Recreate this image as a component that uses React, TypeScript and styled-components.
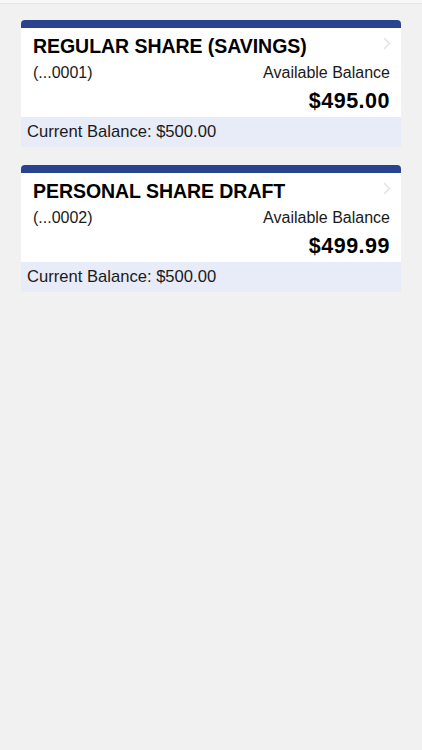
import React, { FC } from 'react';
import styled, { createGlobalStyle } from 'styled-components';

const GlobalStyle = createGlobalStyle`
  html, body {
    margin: 0;
    padding: 0;
    background: #f1f1f1;
  }
  body {
    font-family: "Liberation Sans", Arial, sans-serif;
    color: #000;
  }
`;

const Page = styled.div`
  min-height: 750px;
  background: #f1f1f1;
  border-top: 3px solid #f7f7f7;
  box-shadow: inset 0 1px 0 #e4e4e4;
  padding: 17px 21px 0 21px;
  box-sizing: border-box;
  display: flex;
  flex-direction: column;
  gap: 18px;
`;

const Card = styled.div`
  width: 380px;
  display: flex;
  flex-direction: column;
`;

const TopBar = styled.div`
  height: 8px;
  background: #2a4391;
  border-radius: 4px 4px 0 0;
`;

const Body = styled.div`
  position: relative;
  background: #fff;
  padding: 6px 11px 0 12px;
  height: 89px;
  box-sizing: border-box;
`;

const Title = styled.div`
  font-size: 19.5px;
  font-weight: 700;
  line-height: 24px;
  letter-spacing: -0.05px;
`;

const Row = styled.div`
  display: flex;
  justify-content: space-between;
  align-items: center;
  margin-top: 5px;
  font-size: 16px;
  line-height: 20px;
  color: #1a1a1a;
`;

const Amount = styled.div`
  text-align: right;
  font-size: 21.5px;
  font-weight: 700;
  line-height: 24px;
  margin-top: 6px;
  letter-spacing: 0.5px;
`;

const Chevron = styled.svg`
  position: absolute;
  top: 9px;
  right: 10px;
`;

const Footer = styled.div`
  background: #e8ebf8;
  height: 30px;
  padding-left: 6px;
  display: flex;
  align-items: center;
  font-size: 16.6px;
  color: #1a1a1a;
`;

interface AccountProps {
  name: string;
  number: string;
  available: string;
  current: string;
}

const AccountCard: FC<AccountProps> = ({ name, number, available, current }) => (
  <Card>
    <TopBar />
    <Body>
      <Title>{name}</Title>
      <Row>
        <span>{number}</span>
        <span>Available Balance</span>
      </Row>
      <Amount>{available}</Amount>
      <Chevron width="8" height="13" viewBox="0 0 8 13">
        <path d="M1.5 1.5 L6.5 6.5 L1.5 11.5" fill="none" stroke="#e2e3ea" strokeWidth="1.6" strokeLinecap="round" strokeLinejoin="round" />
      </Chevron>
    </Body>
    <Footer>Current Balance: {current}</Footer>
  </Card>
);

const App: FC = () => (
  <>
    <GlobalStyle />
    <Page>
      <AccountCard name="REGULAR SHARE (SAVINGS)" number="(...0001)" available="$495.00" current="$500.00" />
      <AccountCard name="PERSONAL SHARE DRAFT" number="(...0002)" available="$499.99" current="$500.00" />
    </Page>
  </>
);

export default App;
